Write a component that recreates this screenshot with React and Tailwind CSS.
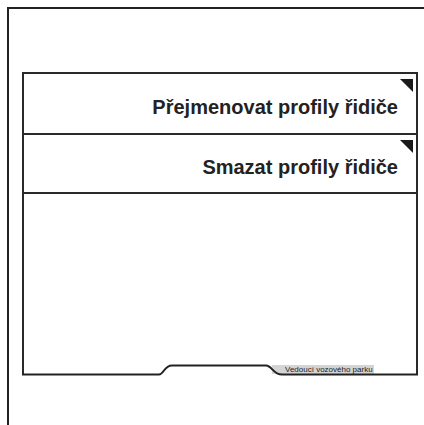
import React from "react";

function Corner() {
  return (
    <svg className="absolute top-[5px] right-[3px]" width="13" height="13" viewBox="0 0 13 13">
      <polygon points="0,0 13,0 13,13" fill="#1a1a1a" />
    </svg>
  );
}

function Row({ label, h }) {
  return (
    <div className={`relative ${h} border-b-2 border-[#2a2a2a] flex items-center justify-end pr-[18px] pt-[6px]`}>
      <span className="text-[20px] font-bold text-[#222]">{label}</span>
      <Corner />
    </div>
  );
}

export default function App() {
  return (
    <div className="w-[424px] h-[425px] overflow-hidden bg-white" style={{ fontFamily: '"Liberation Sans", Arial, sans-serif' }}>
      <div className="ml-[7px] mt-[7px] w-[430px] h-[430px] border-l-2 border-t-2 border-[#222] pt-[63px] pl-[13px]">
        <div className="relative w-[396px] h-[303px] border-l-2 border-r-2 border-t-2 border-[#2a2a2a] flex flex-col">
          <Row label="Přejmenovat profily řidiče" h="h-[61px]" />
          <Row label="Smazat profily řidiče" h="h-[59px]" />
          <div className="flex-1 flex items-end pb-[1px] pl-[248px]">
            <div className="h-[9px] w-[102px] bg-[#d4d4d4] flex items-center pl-[13px]">
              <span className="text-[8px] leading-none text-[#222]">Vedoucí vozového parku</span>
            </div>
          </div>
          <svg className="absolute -left-[2px] -bottom-[2px]" width="396" height="16" viewBox="0 0 396 16">
            <path d="M0,13.5 H137 C142,13.5 142,4.5 150,4.5 H244 C250,4.5 251,13.5 260,13.5 H396" fill="none" stroke="#222" strokeWidth="2" />
          </svg>
        </div>
      </div>
    </div>
  );
}
